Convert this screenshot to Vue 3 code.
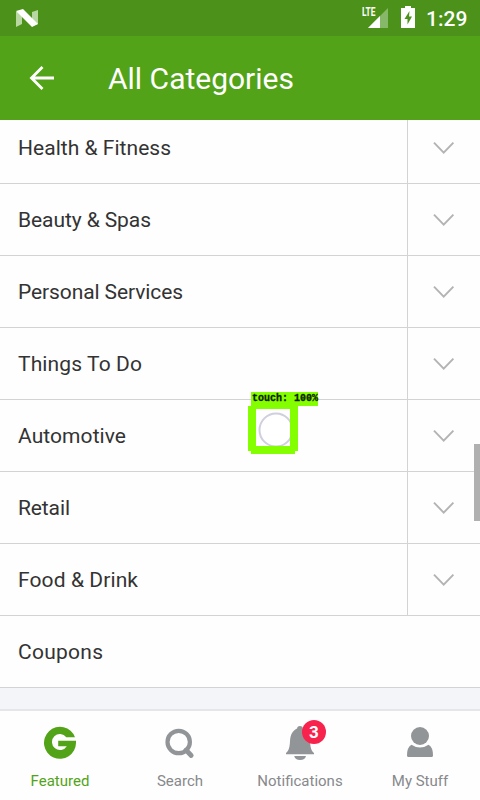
<script setup>
const categories = [
  { name: 'Health & Fitness', expandable: true, width: 153 },
  { name: 'Beauty & Spas', expandable: true, width: 133 },
  { name: 'Personal Services', expandable: true, width: 165 },
  { name: 'Things To Do', expandable: true, width: 124 },
  { name: 'Automotive', expandable: true, width: 108 },
  { name: 'Retail', expandable: true, width: 52 },
  { name: 'Food & Drink', expandable: true, width: 120 },
  { name: 'Coupons', expandable: false, width: 85 },
]
</script>

<template>
  <div class="screen">
    <header class="status">
      <svg class="nougat" width="22" height="19" viewBox="0 0 22 19">
        <path d="M0 3 L6 1 V15 L0 18Z M16 3 L22 1 V15 L16 17Z" fill="#b9d7a0" />
        <path d="M0 2 L7 0 L22 15 L16 18Z" fill="#fff" />
      </svg>
      <div class="indicators">
        <svg class="signal" width="28" height="24" viewBox="0 0 28 24">
          <path d="M26 3 V23 H6Z" fill="#87b869" />
          <path d="M18 11 V23 H6Z" fill="#fff" />
          <text x="0" y="11.2" textLength="13.5" lengthAdjust="spacingAndGlyphs" class="lte">LTE</text>
        </svg>
        <svg class="battery" width="14" height="22" viewBox="0 0 14 22">
          <path d="M4 0 H10 V2 H14 V22 H0 V2 H4Z" fill="#fff" />
          <path d="M8.5 5 L3.5 13 H6.5 V18.5 L11 10.5 H8Z" fill="#4b911a" />
        </svg>
        <span class="clock">1:29</span>
      </div>
    </header>

    <div class="toolbar">
      <svg class="back" width="26" height="26" viewBox="0 0 26 26">
        <path d="M13.5 2 L2.5 13 L13.5 24 M2.5 13 H25" fill="none" stroke="#fff" stroke-width="2.8" />
      </svg>
      <h1>All Categories</h1>
    </div>

    <main class="viewport">
      <ul class="list">
        <li v-for="item in categories" :key="item.name" class="row">
          <svg class="name" height="71" width="200">
            <text x="18" y="43" :textLength="item.width">{{ item.name }}</text>
          </svg>
          <span v-if="item.expandable" class="expand">
            <svg width="22" height="14" viewBox="0 0 22 14">
              <path d="M1 1.6 L10.7 11.6 L20.4 1.6" fill="none" stroke="#b3b3b3" stroke-width="1.9" />
            </svg>
          </span>
        </li>
      </ul>
      <div class="scrollbar"></div>
      <div class="touch">
        <svg width="72" height="66" viewBox="0 0 72 66">
          <circle cx="28" cy="40" r="16.5" fill="#fff" stroke="#cfcfdd" stroke-width="2" />
          <path fill="#84ff00" fill-rule="evenodd" d="M3 2 H70 V16 H50 V61 H47 V64 H3 V61 H0 V16 H3Z M8 19 V56 H42 V19Z" />
        </svg>
        <span class="reading">touch: 100%</span>
      </div>
    </main>

    <nav class="tabs">
      <a class="tab active">
        <svg width="36" height="36" viewBox="0 0 36 36">
          <path fill="#53a318" d="M33 12.2 A16 16 0 1 0 34 18 V15.8 H16.2 V21.2 H24.8 A8 8 0 1 1 24.3 12.2Z" />
        </svg>
        <span>Featured</span>
      </a>
      <a class="tab">
        <svg width="36" height="36" viewBox="0 0 36 36">
          <circle cx="16.7" cy="17" r="11.2" fill="none" stroke="#929598" stroke-width="4.2" />
          <path d="M24 25 L29.2 30.5" stroke="#929598" stroke-width="4.8" stroke-linecap="round" />
        </svg>
        <span>Search</span>
      </a>
      <a class="tab">
        <svg width="36" height="36" viewBox="0 0 36 36">
          <path fill="#929598" d="M15 4 A3 3 0 0 1 21 4 C26 6 27.5 10 28 16 C28.4 22 29 25.5 32 28 V29.2 H4 V28 C7 25.5 7.7 22 8 16 C8.5 10 10 6 15 3.5Z M12.2 31 H24 A6 5 0 0 1 12.2 31Z" />
        </svg>
        <b class="badge">3</b>
        <span>Notifications</span>
      </a>
      <a class="tab">
        <svg width="36" height="36" viewBox="0 0 36 36">
          <circle cx="18" cy="11" r="9" fill="#929598" />
          <path fill="#929598" d="M9.5 19.7 Q18 25.5 26.5 19.7 Q31 22 31 30.5 Q31 32 29.5 32 H6.5 Q5 32 5 30.5 Q5 22 9.5 19.7Z" />
        </svg>
        <span>My Stuff</span>
      </a>
    </nav>
  </div>
</template>

<style>
body {
  margin: 0;
}
</style>

<style scoped>
.screen {
  width: 480px;
  height: 800px;
  display: flex;
  flex-direction: column;
  overflow: hidden;
  background: #f4f5f8;
  font-family: Roboto, sans-serif;
}
.status {
  height: 36px;
  flex: none;
  box-sizing: border-box;
  padding: 0 12px 0 16px;
  display: flex;
  align-items: center;
  justify-content: space-between;
  background: #4b911a;
}
.indicators {
  display: flex;
  align-items: center;
}
.signal {
  margin: 0 11px 2px 0;
}
.lte {
  font: 700 12.5px Roboto, sans-serif;
  fill: #fff;
}
.battery {
  margin: 0 11px 2px 0;
}
.clock {
  width: 42px;
  color: #fff;
  font-size: 21px;
  font-weight: 500;
  line-height: 36px;
  padding-top: 1px;
  white-space: nowrap;
}
.toolbar {
  height: 84px;
  flex: none;
  box-sizing: border-box;
  padding-left: 29px;
  display: flex;
  align-items: center;
  background: #53a318;
}
.back {
  margin-right: 53px;
}
h1 {
  margin: 0;
  padding-top: 2px;
  color: #fff;
  font-size: 30px;
  font-weight: 400;
  line-height: 36px;
}
.viewport {
  position: relative;
  flex: 1;
  min-height: 0;
}
.list {
  height: 568px;
  margin: 0;
  padding: 0;
  display: flex;
  flex-direction: column;
  justify-content: flex-end;
  overflow: hidden;
  list-style: none;
}
.row {
  height: 72px;
  flex: none;
  box-sizing: border-box;
  display: flex;
  justify-content: space-between;
  border-bottom: 1px solid #d3d3d4;
  background: #fefefe;
}
.name {
  fill: #333;
  font-size: 21px;
}
.expand {
  width: 73px;
  box-sizing: border-box;
  padding-right: 1px;
  border-left: 1px solid #d3d3d4;
  display: flex;
  align-items: center;
  justify-content: center;
}
.scrollbar {
  position: absolute;
  top: 324px;
  right: 0;
  width: 6px;
  height: 77px;
  background: #b0b0b0;
}
.touch {
  position: absolute;
  left: 248px;
  top: 270px;
}
.reading {
  position: absolute;
  left: 4px;
  top: 2px;
  color: #102000;
  font: 700 10px/13px "Liberation Mono", monospace;
  white-space: nowrap;
  -webkit-text-stroke: 0.3px #102000;
}
.tabs {
  height: 91px;
  flex: none;
  box-sizing: border-box;
  border-top: 2px solid #e5e6e9;
  display: grid;
  grid-template-columns: repeat(4, 1fr);
  background: #fefefe;
}
.tab {
  position: relative;
  display: flex;
  flex-direction: column;
  align-items: center;
  padding-top: 14px;
  gap: 10px;
  color: #87898c;
  font-size: 15px;
  line-height: 20px;
}
.active {
  color: #53a318;
}
.badge {
  position: absolute;
  left: 62px;
  top: 9px;
  width: 24px;
  height: 24px;
  border-radius: 50%;
  background: #f7234d;
  color: #fff;
  font-size: 17px;
  line-height: 24px;
  text-align: center;
}
</style>
